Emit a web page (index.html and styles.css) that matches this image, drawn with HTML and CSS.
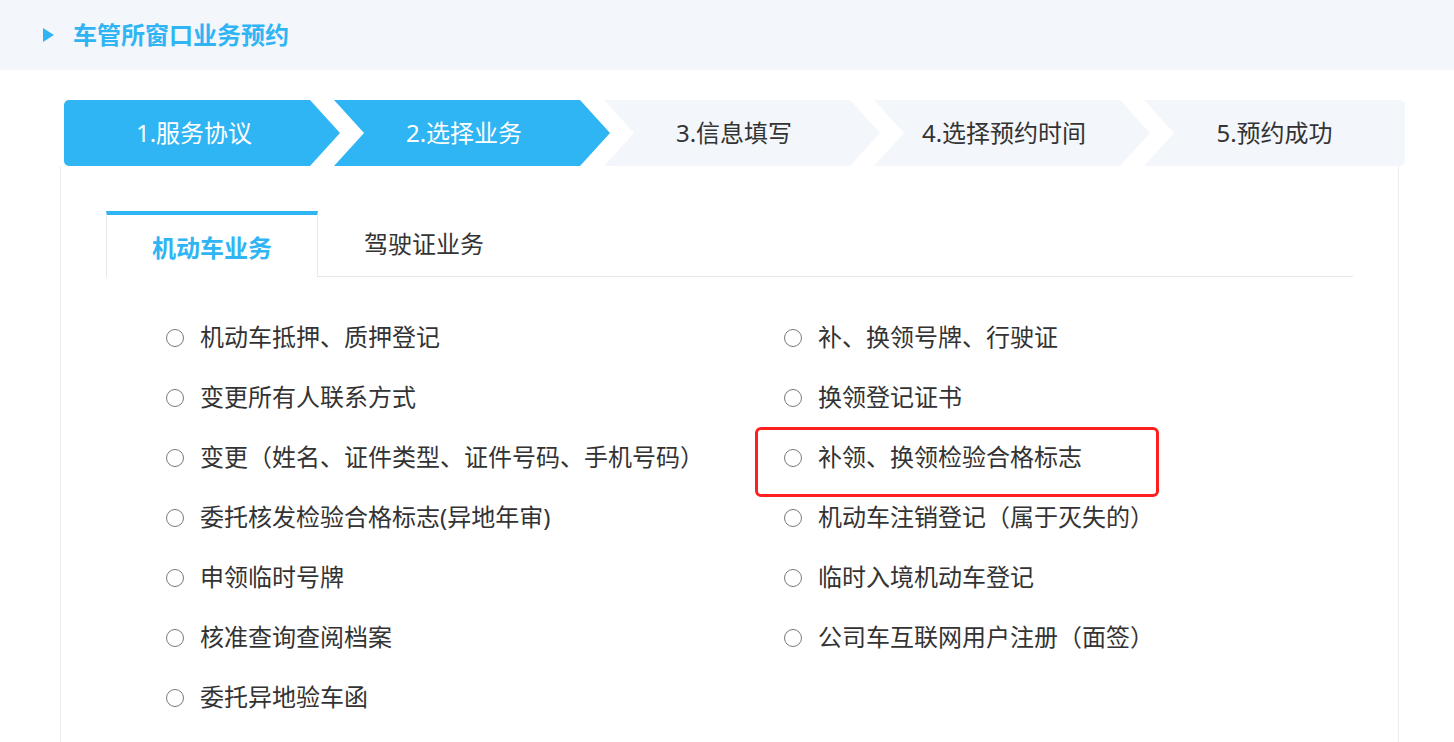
FILE: index.html
```html
<!DOCTYPE html>
<html lang="zh-CN">
<head>
<meta charset="utf-8">
<title>车管所窗口业务预约</title>
<link rel="stylesheet" href="styles.css">
</head>
<body>
<header class="page-head">
  <span class="head-arrow"></span>
  <h1 class="head-title">车管所窗口业务预约</h1>
</header>
<main class="main">
  <ol class="steps">
    <li class="step step-first active">1.服务协议</li>
    <li class="step active">2.选择业务</li>
    <li class="step">3.信息填写</li>
    <li class="step">4.选择预约时间</li>
    <li class="step step-last">5.预约成功</li>
  </ol>
  <section class="card">
    <div class="tabs">
      <div class="tab active">机动车业务</div>
      <div class="tab">驾驶证业务</div>
    </div>
    <div class="options">
      <ul class="col">
        <li class="opt"><span class="radio"></span><span class="label">机动车抵押、质押登记</span></li>
        <li class="opt"><span class="radio"></span><span class="label">变更所有人联系方式</span></li>
        <li class="opt"><span class="radio"></span><span class="label">变更（姓名、证件类型、证件号码、手机号码）</span></li>
        <li class="opt"><span class="radio"></span><span class="label">委托核发检验合格标志(异地年审)</span></li>
        <li class="opt"><span class="radio"></span><span class="label">申领临时号牌</span></li>
        <li class="opt"><span class="radio"></span><span class="label">核准查询查阅档案</span></li>
        <li class="opt"><span class="radio"></span><span class="label">委托异地验车函</span></li>
      </ul>
      <ul class="col">
        <li class="opt"><span class="radio"></span><span class="label">补、换领号牌、行驶证</span></li>
        <li class="opt"><span class="radio"></span><span class="label">换领登记证书</span></li>
        <li class="opt highlight"><span class="radio"></span><span class="label">补领、换领检验合格标志</span></li>
        <li class="opt"><span class="radio"></span><span class="label">机动车注销登记（属于灭失的）</span></li>
        <li class="opt"><span class="radio"></span><span class="label">临时入境机动车登记</span></li>
        <li class="opt"><span class="radio"></span><span class="label">公司车互联网用户注册（面签）</span></li>
      </ul>
    </div>
  </section>
</main>
</body>
</html>
```

FILE: styles.css
```css
* { box-sizing: border-box; }
html, body { margin: 0; padding: 0; background: #fff; }
body {
  font-family: "Noto Sans", "Noto Sans CJK SC", sans-serif;
  color: #333;
  overflow: hidden;
}

.page-head {
  height: 70px;
  background: #f3f6fa;
  display: flex;
  align-items: center;
  padding-left: 43px;
}
.head-arrow {
  width: 0;
  height: 0;
  border-top: 7px solid transparent;
  border-bottom: 7px solid transparent;
  border-left: 11px solid #30b5f4;
  margin-right: 19px;
}
.head-title {
  margin: 0;
  font-size: 24px;
  line-height: 34px;
  font-weight: 700;
  color: #30b5f4;
}

.main {
  margin-left: 60px;
  width: 1339px;
  padding-top: 30px;
}

.steps {
  list-style: none;
  margin: 0 0 0 4px;
  padding: 0;
  display: flex;
  height: 66px;
}
.step {
  flex: none;
  width: 276px;
  height: 66px;
  margin-right: -6px;
  padding-right: 16px;
  background: #f3f6fa;
  color: #333;
  font-size: 24px;
  line-height: 66px;
  text-align: center;
  clip-path: polygon(0 0, 246px 0, 276px 33px, 246px 66px, 0 66px, 30px 33px);
}
.step.active { background: #30b5f4; color: #fff; }
.step-first {
  border-radius: 5px 0 0 5px;
  clip-path: polygon(0 0, 246px 0, 276px 33px, 246px 66px, 0 66px);
}
.step-last {
  width: 261px;
  margin-right: 0;
  padding-right: 0;
  border-radius: 0 5px 5px 0;
  clip-path: polygon(0 0, 100% 0, 100% 100%, 0 100%, 30px 33px);
}

.card {
  border-left: 1px solid #ececec;
  border-right: 1px solid #ececec;
  padding: 45px 45px 40px;
  min-height: 600px;
}

.tabs {
  display: flex;
  align-items: flex-start;
  border-bottom: 1px solid #e8e8e8;
}
.tab {
  padding: 16px 45px 12px;
  line-height: 34px;
  font-size: 24px;
  color: #333;
  border-left: 1px solid transparent;
  border-right: 1px solid transparent;
}
.tab.active {
  color: #30b5f4;
  font-weight: 700;
  background: #fff;
  border-top: 4px solid #30b5f4;
  border-left-color: #e8e8e8;
  border-right-color: #e8e8e8;
  margin-bottom: -1px;
}

.options {
  display: flex;
  padding: 31px 0 0 60px;
}
.col {
  list-style: none;
  margin: 0;
  padding: 0;
  flex: none;
  width: 618px;
}
.col + .col { width: auto; flex: 1; }
.opt {
  position: relative;
  height: 60px;
  display: flex;
  align-items: center;
  font-size: 24px;
  color: #333;
}
.label { padding-bottom: 5px; }
.radio {
  width: 18px;
  height: 18px;
  border: 1px solid #7a7a7a;
  border-radius: 50%;
  background: #fff;
  margin-right: 16px;
  flex: none;
}
.highlight::after {
  content: "";
  position: absolute;
  left: -29px;
  top: -1px;
  width: 398px;
  height: 64px;
  border: 3px solid #ff1f1f;
  border-radius: 6px;
  pointer-events: none;
}
```
